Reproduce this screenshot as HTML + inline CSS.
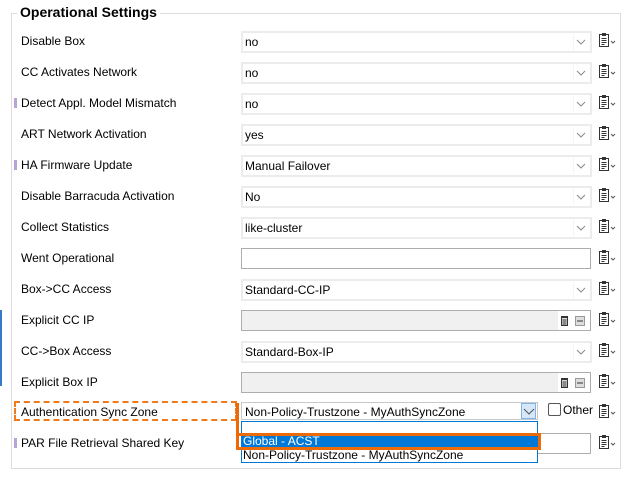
<!DOCTYPE html>
<html><head><style>
body{margin:0;width:631px;height:480px;background:#fff;font-family:"Liberation Sans",Arial,sans-serif;font-size:12px;color:#000;position:relative;overflow:hidden}
.fs{position:absolute;left:11px;top:13px;width:608px;height:454px;border:1px solid #dcdcdc}
.title{position:absolute;left:17px;top:4px;background:#fff;padding:0 3px;font-weight:bold;font-size:14px}
.lbl{position:absolute;left:21px;font-size:12px;line-height:14px}
.mark{position:absolute;left:14px;width:3px;height:10px;background:#b9a3d8}
.cb{position:absolute;left:241px;width:345px;height:18px;border:2px solid #ececec;background:#fff;font-size:12px;line-height:18px;padding-left:2px;box-sizing:content-box}
.arr{position:absolute;right:2px;top:1px;width:14px;height:16px;border-left:1px solid #f4f4f4}
.tf{position:absolute;left:241px;width:348px;height:19px;border:1px solid #adadad;background:#fff}
.tf.g{background:#f0f0f0}
.ico{position:absolute;left:598px;width:16px;height:16px}
</style></head><body>
<div style="position:absolute;left:0;top:310px;width:2px;height:76px;background:#3a78c8"></div>
<div class="fs"></div>
<div class="title">Operational Settings</div>

<div id="rows"></div>
<script>
var rows=[["Disable Box","c","no"],["CC Activates Network","c","no"],["Detect Appl. Model Mismatch","c","no",1],["ART Network Activation","c","yes"],["HA Firmware Update","c","Manual Failover",1],["Disable Barracuda Activation","c","No"],["Collect Statistics","c","like-cluster"],["Went Operational","t",""],["Box->CC Access","c","Standard-CC-IP"],["Explicit CC IP","g",""],["CC->Box Access","c","Standard-Box-IP"],["Explicit Box IP","g",""],["Authentication Sync Zone","a",""],["PAR File Retrieval Shared Key","p","",1]];
var h="";
var chev='<svg width="14" height="16" viewBox="0 0 14 16"><path d="M3 6l4 4 4-4" fill="none" stroke="#888" stroke-width="1"/></svg>';
var clip='<svg width="18" height="18" viewBox="0 0 18 18"><rect x="1.5" y="2.5" width="9" height="12" fill="#fff" stroke="#333"/><rect x="4" y="1" width="4" height="3" fill="#333"/><path d="M3.5 6.5h5M3.5 8.5h5M3.5 10.5h5M3.5 12.5h3" stroke="#333"/><path d="M13 9l2 2 2-2" fill="none" stroke="#555"/></svg>';
rows.forEach(function(r,i){
 var y=41+i*31-(i>=13?1:0);
 if(i==12)y=412;
 h+='<div class="lbl" style="top:'+(y-7)+'px">'+r[0].replace(">","&gt;")+'</div>';
 if(r[3])h+='<div class="mark" style="top:'+(y-5)+'px"></div>';
 var t=y-10;
 if(r[1]=="c")h+='<div class="cb" style="top:'+t+'px">'+r[2]+'<div class="arr">'+chev+'</div></div>';
 if(r[1]=="t"||r[1]=="p")h+='<div class="tf" style="top:'+t+'px"></div>';
 if(r[1]=="g")h+='<div class="tf g" style="top:'+t+'px"><div style="position:absolute;right:0;top:0;width:32px;height:19px;background:#fff"><svg width="32" height="19"><rect x="3" y="5" width="7" height="10" fill="#333"/><rect x="4" y="7" width="5" height="7" fill="#ddd"/><path d="M4.5 9h4M4.5 11h4M4.5 13h4" stroke="#333"/><rect x="17.5" y="5.5" width="9" height="9" fill="#ddd" stroke="#999"/><path d="M19 10h6" stroke="#333"/></svg></div></div>';
 h+='<div class="ico" style="top:'+(t+1)+'px">'+clip+'</div>';
});
document.getElementById("rows").innerHTML=h;
</script>
<!-- auth sync combo -->
<div style="position:absolute;left:241px;top:402px;width:296px;height:18px;border:1px solid #c8c8c8;background:#fff;line-height:18px;padding-left:3px;box-sizing:border-box;width:297px">Non-Policy-Trustzone - MyAuthSyncZone</div>
<div style="position:absolute;left:521px;top:403px;width:15px;height:16px;background:#d6e8f8;border:1px solid #7eb4ea;box-sizing:border-box"><svg width="14" height="14"><path d="M2 5l5 5 5-5" fill="none" stroke="#555"/></svg></div>
<div style="position:absolute;left:548px;top:403px;width:11px;height:11px;border:1px solid #555;border-radius:2px"></div>
<div style="position:absolute;left:563px;top:403px;font-size:12px">Other</div>
<!-- dropdown -->
<div style="position:absolute;left:241px;top:421px;width:297px;height:42px;border:1px solid #0078d7;background:#fff;box-sizing:border-box"></div>
<div style="position:absolute;left:241px;top:435px;width:296px;height:13px;background:#0078d7;color:#fff;line-height:13px;padding-left:2px;box-sizing:border-box">Global - ACST</div>
<div style="position:absolute;left:243px;top:449px;line-height:13px">Non-Policy-Trustzone - MyAuthSyncZone</div>
<!-- orange annotations -->
<div style="position:absolute;left:14px;top:401px;width:223px;height:20px;border:2px dashed #f07a1a;box-sizing:border-box"></div>
<div style="position:absolute;left:236px;top:403px;width:3px;height:32px;background:#ec6a08"></div>
<div style="position:absolute;left:236px;top:433px;width:305px;height:17px;border:3px solid #ec6a08;box-sizing:border-box"></div>
</body></html>
